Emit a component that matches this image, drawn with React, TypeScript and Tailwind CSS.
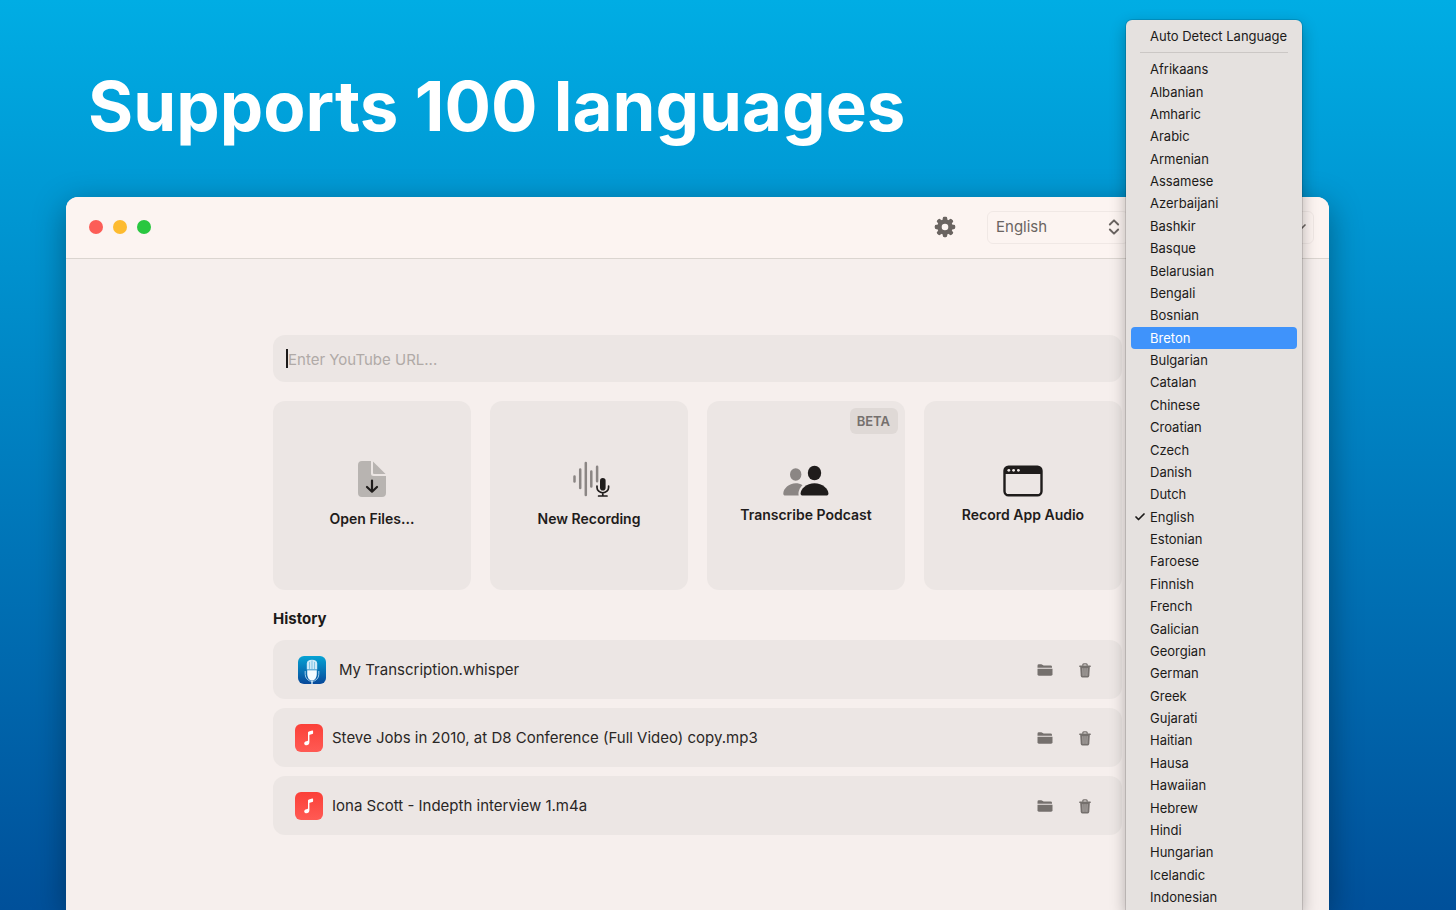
import React from "react";
import { ChevronsUpDown, Check, ChevronDown } from "lucide-react";

const languages = [
  "Afrikaans", "Albanian", "Amharic", "Arabic", "Armenian", "Assamese", "Azerbaijani", "Bashkir",
  "Basque", "Belarusian", "Bengali", "Bosnian", "Breton", "Bulgarian", "Catalan", "Chinese",
  "Croatian", "Czech", "Danish", "Dutch", "English", "Estonian", "Faroese", "Finnish", "French",
  "Galician", "Georgian", "German", "Greek", "Gujarati", "Haitian", "Hausa", "Hawaiian", "Hebrew",
  "Hindi", "Hungarian", "Icelandic", "Indonesian",
];

function GearIcon() {
  const teeth = [0, 45, 90, 135, 180, 225, 270, 315];
  return (
    <svg viewBox="0 0 22 22" className="size-[22px]" fill="#6a6461" aria-hidden="true">
      {teeth.map((a) => (
        <rect key={a} x="8.8" y=".8" width="4.4" height="5" rx="1.4" transform={`rotate(${a} 11 11)`} />
      ))}
      <path fillRule="evenodd" d="M11 3.200a7.800 7.800 0 1 0 0 15.600 7.800 7.800 0 0 0 0-15.600Zm0 4.500a3.300 3.300 0 1 1 0 6.600 3.300 3.300 0 0 1 0-6.600Z" />
    </svg>
  );
}

function FileIcon() {
  return (
    <svg viewBox="0 0 28 36" className="h-9 w-7" aria-hidden="true">
      <path fill="#b8b4b1" d="M4 0h9v12.500a2.500 2.500 0 0 0 2.500 2.500H28v17a4 4 0 0 1-4 4H4a4 4 0 0 1-4-4V4a4 4 0 0 1 4-4Z" />
      <path fill="#b8b4b1" d="M15 .4 27.600 13H16a1 1 0 0 1-1-1Z" />
      <path fill="none" stroke="#1f1c1b" strokeWidth="2.200" strokeLinecap="round" strokeLinejoin="round" d="M14 19.500v11M9 26l5 4.700L19 26" />
    </svg>
  );
}

function RecordingIcon() {
  return (
    <svg viewBox="0 0 42 36" className="h-9 w-[42px]" fill="none" strokeLinecap="round" aria-hidden="true">
      <path stroke="#8b8684" strokeWidth="2.500" d="M6.500 15.500v5M12.200 8.500v18.500M17.800 2v32M23.300 10.500v15M29.100 5.800v14.500" />
      <rect x="32" y="17" width="5.600" height="12.500" rx="2.800" fill="#1f1c1b" />
      <path stroke="#1f1c1b" strokeWidth="1.700" d="M29 25v1.500a5.800 5.300 0 0 0 11.600 0V25M34.800 32v2.500M30.600 35h8.400" />
    </svg>
  );
}

function PeopleIcon() {
  return (
    <svg viewBox="0 0 46 32" className="h-8 w-[46px]" aria-hidden="true">
      <ellipse cx="12.700" cy="9.500" rx="5.700" ry="6.200" fill="#8b8684" />
      <path fill="#8b8684" d="M19.500 20.200C17.500 18.800 15 18.200 12.800 18.200 6 18.200.3 23.600.3 28.500c0 1.400.7 2 2 2h13.400c-.8-3.800 1-7.800 3.800-10.300Z" />
      <ellipse cx="31.500" cy="8" rx="6.700" ry="7.300" fill="#1f1c1b" />
      <path fill="#1f1c1b" d="M31.500 18.200c-8 0-13.900 5.600-13.900 10.300 0 1.500.8 2 2.200 2h23.400c1.400 0 2.200-.5 2.200-2 0-4.700-5.900-10.300-13.900-10.300Z" />
    </svg>
  );
}

function WindowIcon() {
  return (
    <svg viewBox="0 0 40 32" className="h-8 w-10" aria-hidden="true">
      <rect x="1.500" y="1.800" width="37" height="28.500" rx="4" fill="none" stroke="#1f1c1b" strokeWidth="2.400" />
      <path fill="#1f1c1b" d="M1.500 9V5.500a4 4 0 0 1 4-4h29a4 4 0 0 1 4 4V9Z" />
      <circle cx="5.800" cy="5.300" r="1.400" fill="#eee8e5" />
      <circle cx="10.600" cy="5.300" r="1.400" fill="#eee8e5" />
      <circle cx="15.400" cy="5.300" r="1.400" fill="#eee8e5" />
    </svg>
  );
}

function FolderIcon() {
  return (
    <svg viewBox="0 0 16 12" className="h-3 w-4" fill="#75706d" aria-hidden="true">
      <path d="M.5 3.800V1.700Q.5.300 1.900.300H4.300q.6 0 1 .4l.5.400q.3.300.9.300h6.900q1.400 0 1.400 1.400v1Z" />
      <path d="M.5 4.800h15v5.500q0 1.400-1.400 1.400H1.900Q.5 11.700.5 10.300Z" />
    </svg>
  );
}

function TrashIcon() {
  return (
    <svg viewBox="0 0 12 15" className="h-[15px] w-3" aria-hidden="true">
      <path fill="none" stroke="#75706d" strokeWidth="1.300" d="M3.800 2.700V1.900q0-1 1-1h2.400q1 0 1 1v.8" />
      <path fill="none" stroke="#75706d" strokeWidth="1.400" strokeLinecap="round" d="M.8 3.200h10.400" />
      <path fill="#75706d" d="M1.200 3.800h9.600l-.5 9q-.1 1.700-1.600 1.700H3.300q-1.500 0-1.600-1.700Z" />
      <path fill="none" stroke="#c4bfbc" strokeWidth=".8" strokeLinecap="round" d="M3.900 5.500l.2 7M6 5.500v7M8.100 5.500l-.2 7" />
    </svg>
  );
}

function WhisperIcon() {
  return (
    <svg viewBox="0 0 28 28" className="size-7" aria-hidden="true">
      <defs>
        <linearGradient id="whisper-bg" x1="0" y1="0" x2="0" y2="1">
          <stop offset="0" stopColor="#06a3d4" />
          <stop offset="1" stopColor="#07489a" />
        </linearGradient>
      </defs>
      <rect width="28" height="28" rx="6" fill="url(#whisper-bg)" />
      <path fill="#cfeaf8" d="M8.800 7.500Q9 3.800 14 3.800t5.200 3.700V13.500H8.800Z" />
      <path stroke="#5fb4dc" strokeWidth=".7" d="M11.500 6V13.500M14 4.500v9M16.500 6V13.500" />
      <path fill="#f3fbff" d="M9.200 14.300h9.600v3.700q0 5.500-4.800 6.800-4.800-1.300-4.800-6.800Z" />
      <path fill="none" stroke="#9ccbea" strokeWidth="1" d="M7.200 15v3.300a6.800 7 0 0 0 13.600 0V15" />
      <path stroke="#d8effb" strokeWidth="1.400" d="M14 25v3" />
    </svg>
  );
}

function MusicIcon() {
  return (
    <svg viewBox="0 0 28 28" className="size-7" aria-hidden="true">
      <defs>
        <linearGradient id="music-bg" x1="0" y1="0" x2="0" y2="1">
          <stop offset="0" stopColor="#fb4038" />
          <stop offset="1" stopColor="#ff5a54" />
        </linearGradient>
      </defs>
      <rect width="28" height="28" rx="6" fill="url(#music-bg)" />
      <path fill="#fff" d="M13 8.500q0-.9.9-1.100l3.300-.8q.9-.2.900.6v2q0 .7-.7.900l-2.700.7q-.3.100-.3.500v6.800c0 2.100-1.300 3.200-2.900 3.200-1.300 0-2.300-.8-2.300-1.900 0-1.200.9-1.900 2.200-2.200l1-.2q.6-.1.600-.7Z" />
    </svg>
  );
}

const actions = [
  { label: "Open Files...", icon: <FileIcon />, gap: "gap-3", beta: false },
  { label: "New Recording", icon: <RecordingIcon />, gap: "gap-3", beta: false },
  { label: "Transcribe Podcast", icon: <PeopleIcon />, gap: "gap-2", beta: true },
  { label: "Record App Audio", icon: <WindowIcon />, gap: "gap-2", beta: false },
];

const history = [
  { name: "My Transcription.whisper", icon: <WhisperIcon />, pad: "gap-[13px] pl-[25px]" },
  { name: "Steve Jobs in 2010, at D8 Conference (Full Video) copy.mp3", icon: <MusicIcon />, pad: "gap-[9px] pl-[22px]" },
  { name: "Iona Scott - Indepth interview 1.m4a", icon: <MusicIcon />, pad: "gap-[9px] pl-[22px]" },
];

function LanguageMenu() {
  return (
    <div
      role="listbox"
      aria-label="Language"
      className="absolute top-5 right-[154px] bottom-0 flex w-[176px] flex-col rounded-t-md bg-[#e5e1df] px-[5px] pt-[5px] pb-[2px] text-[13px] leading-[22px] text-[#1c1a19] shadow-[0_0_0_1px_rgba(0,0,0,0.12),0_6px_16px_rgba(0,0,0,0.3)]"
    >
      <button role="option" aria-selected="false" className="pl-[19px] text-left whitespace-nowrap">
        Auto Detect Language
      </button>
      <hr className="mx-[9px] mt-[5px] mb-[5px] border-[#cbc7c5]" />
      <div className="flex flex-1 flex-col">
        {languages.map((name) => (
          <button
            key={name}
            role="option"
            aria-selected={name === "English"}
            className={
              name === "Breton"
                ? "flex flex-1 items-center rounded bg-[#3f93fb] text-white"
                : "flex flex-1 items-center"
            }
          >
            <span className="flex w-[19px] pl-[3px]">
              {name === "English" && <Check className="size-3" strokeWidth={3.5} aria-hidden="true" />}
            </span>
            {name}
          </button>
        ))}
      </div>
    </div>
  );
}

export default function App() {
  return (
    <main className="relative flex h-screen flex-col overflow-hidden bg-linear-to-b from-[#00ade4] to-[#00509a] font-['Inter',sans-serif]">
      <h1 className="px-[88px] pt-[62px] pb-[47px] text-[69px] leading-[88px] font-bold whitespace-nowrap text-white">
        Supports 100 languages
      </h1>

      <section className="mr-[127px] ml-[66px] flex flex-1 flex-col overflow-hidden rounded-t-xl bg-[#f6efed] shadow-[0_8px_32px_rgba(0,0,0,0.35)]">
        <header className="flex h-[62px] shrink-0 items-center border-b border-[#dbd5d0] bg-[#fcf4f1] pr-[15px] pb-px pl-[23px]">
          <div className="flex gap-[10px]">
            <button aria-label="Close" className="size-[14px] rounded-full bg-[#fc5d57]" />
            <button aria-label="Minimize" className="size-[14px] rounded-full bg-[#fdbb30]" />
            <button aria-label="Zoom" className="size-[14px] rounded-full bg-[#29c740]" />
          </div>
          <button aria-label="Settings" className="mr-[31px] ml-auto">
            <GearIcon />
          </button>
          <div className="flex h-[33px] w-[142px] items-center rounded-md border border-[#f0e8e5]">
            <div className="relative flex flex-1 items-center">
              <select aria-label="Language" className="w-full appearance-none pl-2 text-[15px] leading-5 text-[#6a6461]">
                <option>English</option>
              </select>
              <ChevronsUpDown className="pointer-events-none absolute right-1 size-5 text-[#6a6461]" strokeWidth={2.3} aria-hidden="true" />
            </div>
          </div>
          <button aria-label="Model" className="ml-2 flex h-[33px] w-[177px] items-center justify-end rounded-md border border-[#f0e8e5] pr-1">
            <ChevronDown className="size-4 text-[#6a6461]" strokeWidth={2.5} aria-hidden="true" />
          </button>
        </header>

        <div className="flex flex-col pt-[76px] pr-[207px] pl-[207px]">
          <div className="flex h-[47px] items-center rounded-xl bg-[#ece6e4] px-[13px]">
            <span className="h-[19px] w-[2px] bg-[#1c1a19]" />
            <input
              type="text"
              aria-label="YouTube URL"
              placeholder="Enter YouTube URL..."
              className="min-w-0 flex-1 bg-transparent pt-[2px] text-[15px] leading-5 text-[#1c1a19] outline-none placeholder:text-[#b0aaa7]"
            />
          </div>

          <div className="mt-[19px] grid grid-cols-4 gap-[19px]">
            {actions.map((a) => (
              <button
                key={a.label}
                className={`relative flex h-[189px] flex-col items-center justify-center rounded-xl bg-[#ece6e4] pb-[2px] text-[14px] leading-5 font-semibold text-[#1f1c1b] ${a.gap}`}
              >
                {a.icon}
                {a.label}
                {a.beta && (
                  <span className="absolute top-[7px] right-[7px] rounded-md bg-[#dfd9d6] pr-2 pl-[7px] py-[3px] text-[13px] leading-5 text-[#75706d]">
                    BETA
                  </span>
                )}
              </button>
            ))}
          </div>

          <h2 className="mt-[19px] text-[15px] leading-5 font-bold text-[#1c1a19]">History</h2>
          <ul className="mt-[11px] flex flex-col gap-[9px]">
            {history.map((h) => (
              <li key={h.name} className={`flex h-[59px] items-center rounded-xl bg-[#ece6e4] pt-px pr-[31px] ${h.pad}`}>
                {h.icon}
                <span className="flex-1 text-[15px] leading-5 whitespace-nowrap text-[#2a2726]">{h.name}</span>
                <div className="flex items-center gap-[26px]">
                  <button aria-label="Show in folder">
                    <FolderIcon />
                  </button>
                  <button aria-label="Delete">
                    <TrashIcon />
                  </button>
                </div>
              </li>
            ))}
          </ul>
        </div>
      </section>

      <LanguageMenu />
    </main>
  );
}
